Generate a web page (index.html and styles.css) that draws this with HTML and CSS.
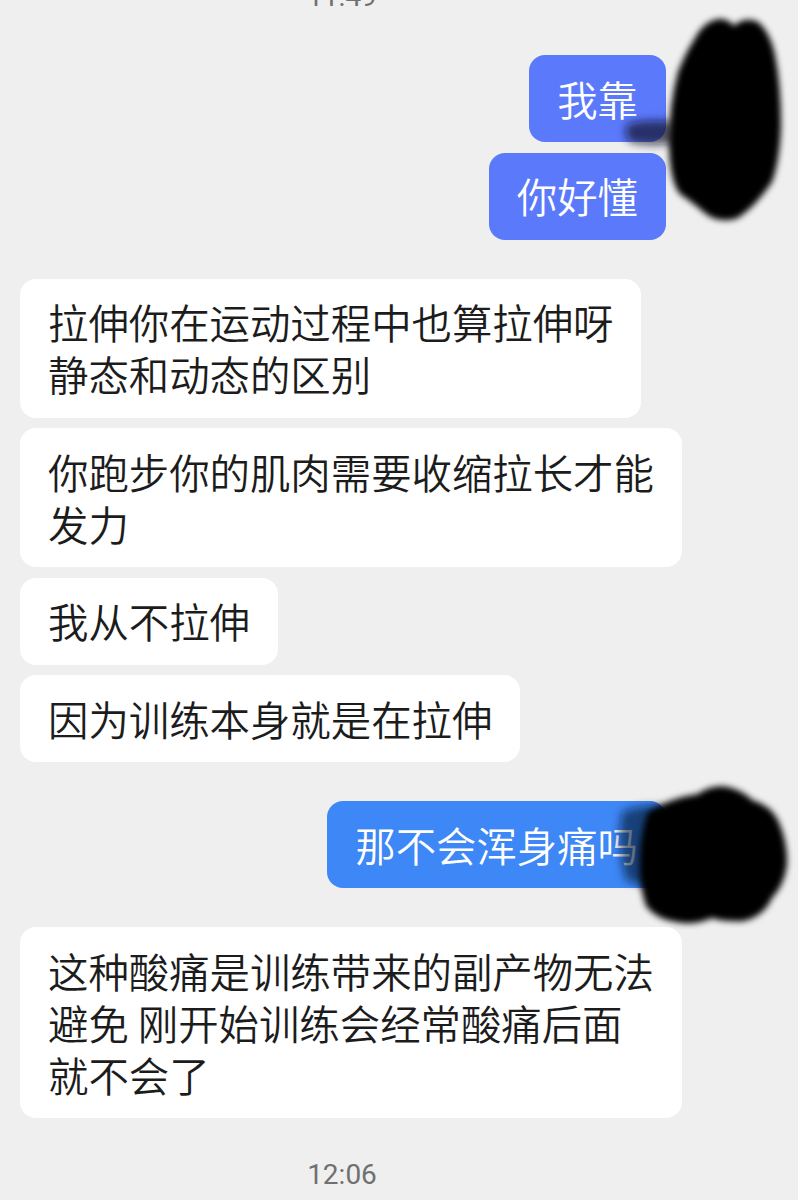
FILE: index.html
```html
<!DOCTYPE html>
<html lang="zh-CN">
<head>
<meta charset="utf-8">
<title>Chat</title>
<link rel="stylesheet" href="styles.css">
</head>
<body>
<div class="screen">
  <div class="time time-top">11:49</div>
  <div class="chat">
    <div class="msg out first"><div class="bubble blue">我靠</div></div>
    <div class="msg out"><div class="bubble blue">你好懂</div></div>
    <div class="msg in new"><div class="bubble white">拉伸你在运动过程中也算拉伸呀<br>静态和动态的区别</div></div>
    <div class="msg in"><div class="bubble white">你跑步你的肌肉需要收缩拉长才能<br>发力</div></div>
    <div class="msg in"><div class="bubble white">我从不拉伸</div></div>
    <div class="msg in"><div class="bubble white">因为训练本身就是在拉伸</div></div>
    <div class="msg out new"><div class="bubble azure">那不会浑身痛吗</div></div>
    <div class="msg in new"><div class="bubble white">这种酸痛是训练带来的副产物无法<br>避免 刚开始训练会经常酸痛后面<br>就不会了</div></div>
  </div>
  <div class="time time-bottom">12:06</div>
  <svg class="scribbles" width="798" height="1200" viewBox="0 0 798 1200" aria-hidden="true">
    <defs>
      <filter id="soft" x="-20%" y="-20%" width="140%" height="140%">
        <feGaussianBlur stdDeviation="3"/>
      </filter>
      <filter id="softer" x="-30%" y="-30%" width="160%" height="160%">
        <feGaussianBlur stdDeviation="4"/>
      </filter>
    </defs>
    <g filter="url(#softer)">
      <path d="M628 124 Q640 119 672 121 L676 143 Q650 147 630 142 Q622 133 628 124 Z" fill="#0a0f2a" opacity="0.7"/>
      <path d="M622 812 Q640 804 662 806 L668 884 Q640 888 626 880 Q616 846 622 812 Z" fill="#06102a" opacity="0.6"/>
    </g>
    <g filter="url(#soft)" fill="#000">
      <path d="M694 40 Q703 22 718 19 Q728 18 734 26 Q744 16 758 22 Q770 32 775 55 Q781 85 781 125 Q780 160 772 182 Q756 206 738 218 Q720 224 706 214 Q692 202 680 194 Q670 182 669 145 Q669 105 678 72 Q686 52 694 40 Z"/>
      <path d="M648 812 Q670 798 698 794 Q712 784 728 787 Q744 791 752 800 Q770 805 778 820 Q788 842 787 865 Q784 886 772 898 Q764 916 744 921 Q724 922 712 918 Q694 926 676 922 Q656 919 646 906 Q638 884 640 852 Q642 826 648 812 Z"/>
    </g>
  </svg>
</div>
</body>
</html>
```
FILE: styles.css
```css
html, body {
  margin: 0;
  padding: 0;
  background: #efefef;
}

.screen {
  position: relative;
  width: 798px;
  height: 1200px;
  overflow: hidden;
  background: #efefef;
  font-family: "Noto Sans CJK SC", "Noto Sans", sans-serif;
}

.time {
  width: 684px;
  text-align: center;
  font-family: Roboto, "Liberation Sans", sans-serif;
  font-size: 28px;
  line-height: 30px;
  color: #707070;
}

.time-top {
  margin-top: -17.6px;
}

.time-bottom {
  margin-top: 42px;
}

.chat {
  display: flex;
  flex-direction: column;
  padding-top: 42.6px;
}

.msg {
  display: flex;
  margin-top: 10.5px;
}

.msg.new {
  margin-top: 39px;
}

.msg.first {
  margin-top: 0;
}

.msg.out {
  justify-content: flex-end;
  padding-right: 132px;
}

.msg.in {
  justify-content: flex-start;
  padding-left: 20px;
}

.bubble {
  font-size: 40.4px;
  font-weight: 350;
  line-height: 52px;
  padding: 17.5px 28px;
  border-radius: 16px;
  white-space: nowrap;
}

.bubble.white {
  background: #ffffff;
  color: #1c1c1c;
}

.bubble.blue {
  background: #5b79fb;
  color: #ffffff;
}

.bubble.azure {
  background: #3d87f6;
  color: #ffffff;
}

.scribbles {
  position: absolute;
  left: 0;
  top: 0;
  pointer-events: none;
}
```
